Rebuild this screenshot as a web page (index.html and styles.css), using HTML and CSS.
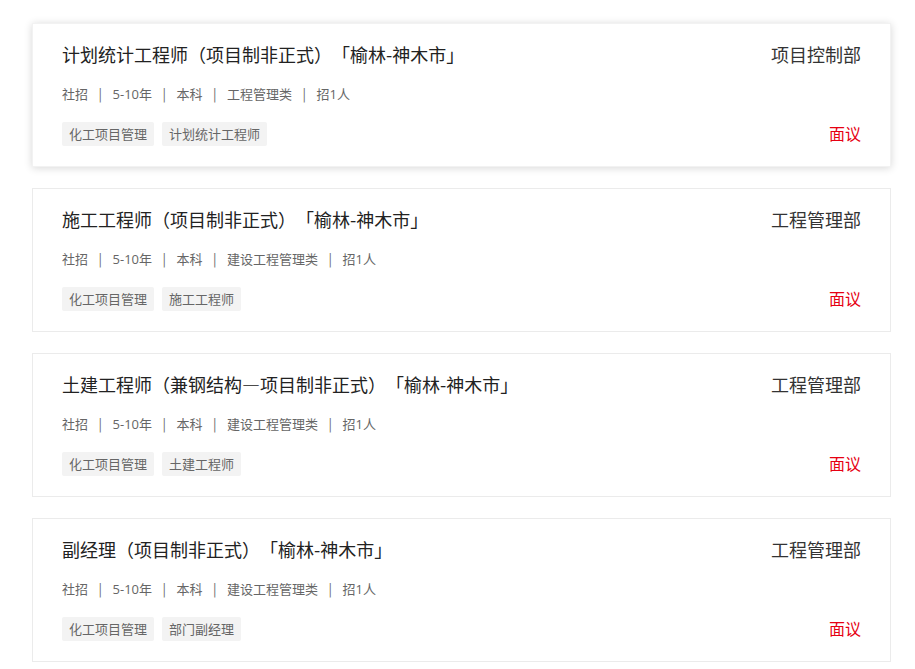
FILE: index.html
```html
<!DOCTYPE html>
<html lang="zh-CN">
<head>
<meta charset="utf-8">
<title>职位列表</title>
<link rel="stylesheet" href="styles.css">
</head>
<body>
<div class="list">
  <div class="card active">
    <div class="row">
      <div class="title">计划统计工程师（项目制非正式）「榆林-神木市」</div>
      <div class="dept">项目控制部</div>
    </div>
    <div class="meta"><span>社招</span><i>|</i><span>5-10年</span><i>|</i><span>本科</span><i>|</i><span>工程管理类</span><i>|</i><span>招1人</span></div>
    <div class="row bottom">
      <div class="tags"><span class="tag">化工项目管理</span><span class="tag">计划统计工程师</span></div>
      <div class="salary">面议</div>
    </div>
  </div>
  <div class="card">
    <div class="row">
      <div class="title">施工工程师（项目制非正式）「榆林-神木市」</div>
      <div class="dept">工程管理部</div>
    </div>
    <div class="meta"><span>社招</span><i>|</i><span>5-10年</span><i>|</i><span>本科</span><i>|</i><span>建设工程管理类</span><i>|</i><span>招1人</span></div>
    <div class="row bottom">
      <div class="tags"><span class="tag">化工项目管理</span><span class="tag">施工工程师</span></div>
      <div class="salary">面议</div>
    </div>
  </div>
  <div class="card">
    <div class="row">
      <div class="title">土建工程师（兼钢结构—项目制非正式）「榆林-神木市」</div>
      <div class="dept">工程管理部</div>
    </div>
    <div class="meta"><span>社招</span><i>|</i><span>5-10年</span><i>|</i><span>本科</span><i>|</i><span>建设工程管理类</span><i>|</i><span>招1人</span></div>
    <div class="row bottom">
      <div class="tags"><span class="tag">化工项目管理</span><span class="tag">土建工程师</span></div>
      <div class="salary">面议</div>
    </div>
  </div>
  <div class="card">
    <div class="row">
      <div class="title">副经理（项目制非正式）「榆林-神木市」</div>
      <div class="dept">工程管理部</div>
    </div>
    <div class="meta"><span>社招</span><i>|</i><span>5-10年</span><i>|</i><span>本科</span><i>|</i><span>建设工程管理类</span><i>|</i><span>招1人</span></div>
    <div class="row bottom">
      <div class="tags"><span class="tag">化工项目管理</span><span class="tag">部门副经理</span></div>
      <div class="salary">面议</div>
    </div>
  </div>
</div>
</body>
</html>
```

FILE: styles.css
```css
* { box-sizing: border-box; }
html, body { margin: 0; padding: 0; background: #fff; }
body {
  font-family: "Noto Sans CJK SC", "Noto Sans", "Liberation Sans", sans-serif;
  color: #333;
  text-spacing-trim: space-all;
}
.list {
  width: 859px;
  margin: 23px 0 0 32px;
  display: flex;
  flex-direction: column;
  gap: 21px;
}
.card {
  height: 144px;
  border: 1px solid #ebebeb;
  background: #fff;
  padding: 18px 29px 20px 29px;
}
.card.active {
  border-color: #f2f2f2;
  box-shadow: 0 1px 8px rgba(0, 0, 0, 0.16);
}
.row {
  display: flex;
  justify-content: space-between;
  align-items: center;
}
.title {
  font-size: 18px;
  line-height: 24px;
  color: #222;
}
.dept {
  font-size: 18px;
  line-height: 24px;
  color: #333;
}
.meta {
  margin-top: 18px;
  font-family: "Open Sans", "Noto Sans CJK SC", sans-serif;
  font-size: 13px;
  line-height: 20px;
  color: #666;
  display: flex;
}
.meta i {
  font-family: "Noto Sans CJK SC", sans-serif;
  font-style: normal;
  padding: 0 10.5px;
}
.bottom { margin-top: 18px; }
.tags { display: flex; gap: 8px; }
.tag {
  background: #f3f3f3;
  color: #666;
  font-size: 13px;
  line-height: 24px;
  height: 24px;
  padding: 0 7px;
  border-radius: 2px;
}
.salary {
  font-size: 16px;
  line-height: 24px;
  color: #e60012;
  margin-top: -2px;
}
```
